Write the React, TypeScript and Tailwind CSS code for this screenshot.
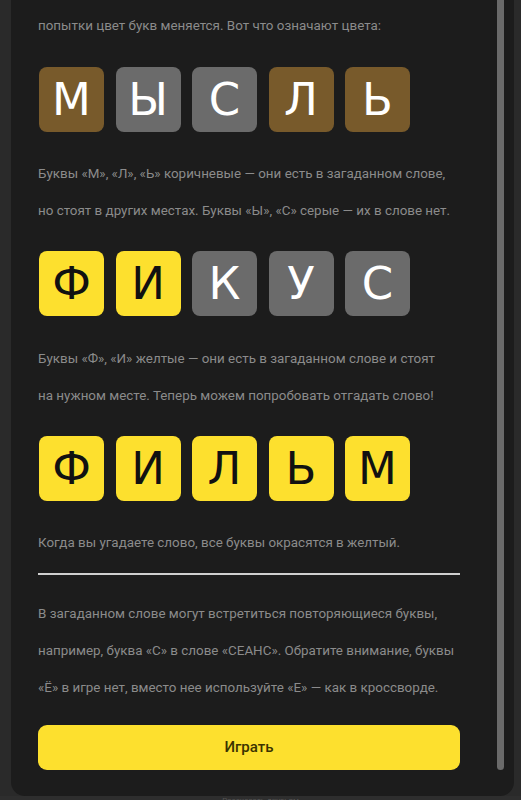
import React from 'react';

type Tile = { ch: string; tone: 'brown' | 'gray' | 'yellow' };

const tileTone: Record<Tile['tone'], string> = {
  brown: 'bg-[#785a2b] text-white',
  gray: 'bg-[#6b6b6b] text-white',
  yellow: 'bg-[#fde02e] text-[#111111]',
};

const rows: Tile[][] = [
  [
    { ch: 'М', tone: 'brown' },
    { ch: 'Ы', tone: 'gray' },
    { ch: 'С', tone: 'gray' },
    { ch: 'Л', tone: 'brown' },
    { ch: 'Ь', tone: 'brown' },
  ],
  [
    { ch: 'Ф', tone: 'yellow' },
    { ch: 'И', tone: 'yellow' },
    { ch: 'К', tone: 'gray' },
    { ch: 'У', tone: 'gray' },
    { ch: 'С', tone: 'gray' },
  ],
  [
    { ch: 'Ф', tone: 'yellow' },
    { ch: 'И', tone: 'yellow' },
    { ch: 'Л', tone: 'yellow' },
    { ch: 'Ь', tone: 'yellow' },
    { ch: 'М', tone: 'yellow' },
  ],
];

function TileRow({ tiles, className }: { tiles: Tile[]; className?: string }) {
  return (
    <div className={`flex gap-[11.5px] pl-px ${className ?? ''}`}>
      {tiles.map((t, i) => (
        <div
          key={i}
          className={`flex h-[65px] w-[65px] items-center justify-center rounded-[8px] font-['DejaVu_Sans',sans-serif] text-[45px] leading-none ${tileTone[t.tone]}`}
        >
          {t.ch}
        </div>
      ))}
    </div>
  );
}

export default function App() {
  return (
    <div className="flex h-[800px] w-full flex-col overflow-hidden bg-[#2a2a2a] font-['Roboto',sans-serif]">
      <div className="ml-[11px] flex h-[796px] w-[503px] shrink-0 rounded-b-[14px] bg-[#1c1c1c]">
        {/* content */}
        <div className="flex w-[486px] flex-col pl-[27px] pr-[37px] pt-[7px] text-[13.4px] leading-[37px] text-[#8b8b8b]">
          <p>попытки цвет букв меняется. Вот что означают цвета:</p>

          <TileRow tiles={rows[0]} className="mt-[23px]" />

          <p className="mt-[23px]">
            Буквы «М», «Л», «Ь» коричневые — они есть в загаданном слове,
            <br />
            но стоят в других местах. Буквы «Ы», «С» серые — их в слове нет.
          </p>

          <TileRow tiles={rows[1]} className="mt-[22px]" />

          <p className="mt-[24px]">
            Буквы «Ф», «И» желтые — они есть в загаданном слове и стоят
            <br />
            на нужном месте. Теперь можем попробовать отгадать слово!
          </p>

          <TileRow tiles={rows[2]} className="mt-[22px]" />

          <p className="mt-[23px]">Когда вы угадаете слово, все буквы окрасятся в желтый.</p>

          <div className="mt-[12px] h-[2px] w-full bg-[#cfcfcf]" />

          <p className="mt-[20px]">
            В загаданном слове могут встретиться повторяющиеся буквы,
            <br />
            например, буква «С» в слове «СЕАНС». Обратите внимание, буквы
            <br />
            «Ё» в игре нет, вместо нее используйте «Е» — как в кроссворде.
          </p>

          <button className="mt-[19px] h-[45px] w-full rounded-[9px] bg-[#fde02e] text-[15px] font-medium leading-none text-[#3b3300]">
            Играть
          </button>
        </div>

        {/* scrollbar */}
        <div className="h-[770px] w-[7px] rounded-b-full bg-[#6a6a6a]" />
      </div>

      <div className="flex flex-1 justify-center bg-[#2e2e2e] pt-px">
        <span className="text-[8px] leading-none text-[#555555]">Рассказать друзьям</span>
      </div>
    </div>
  );
}
